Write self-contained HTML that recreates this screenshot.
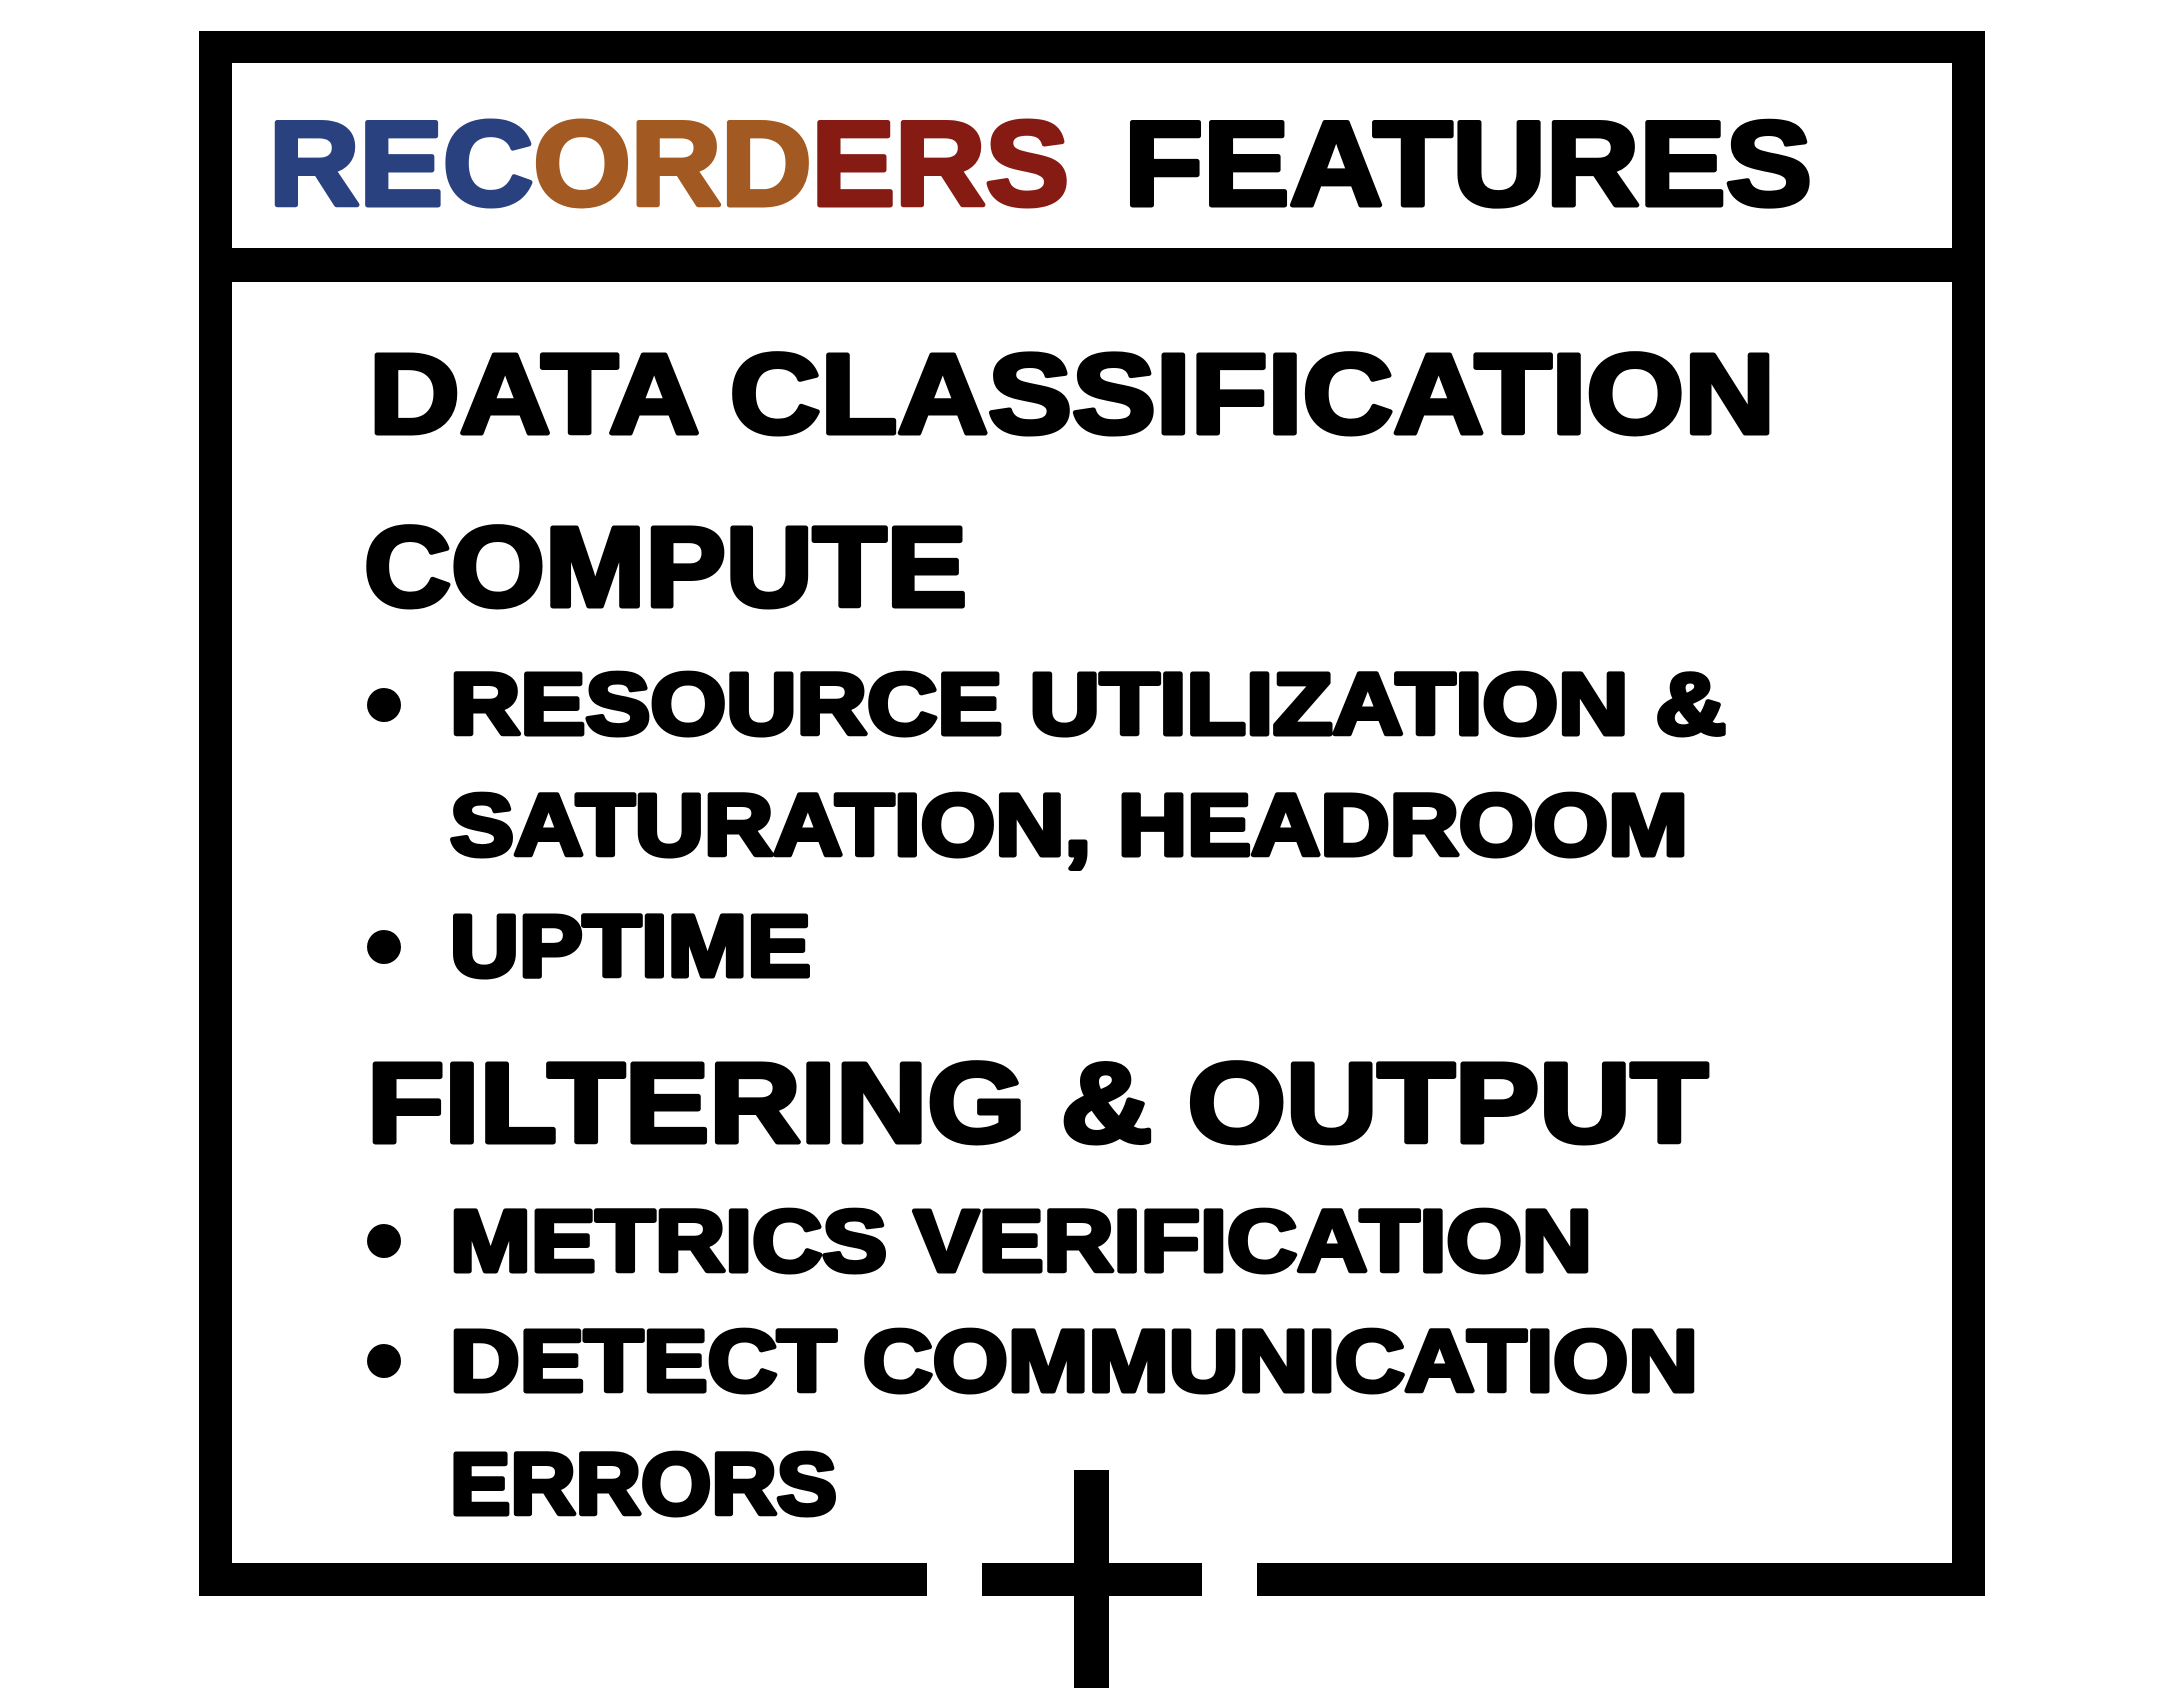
<!DOCTYPE html>
<html><head><meta charset="utf-8"><style>
html,body{margin:0;padding:0;background:#fff;width:2182px;height:1688px;overflow:hidden}
svg{display:block}
text{font-family:"Liberation Sans",Arial,sans-serif;font-weight:bold;stroke-linejoin:round}
</style></head><body>
<svg width="2182" height="1688" viewBox="0 0 2182 1688" xmlns="http://www.w3.org/2000/svg">
<rect width="2182" height="1688" fill="#fff"/>
<g fill="#000">
<rect x="199" y="31" width="1786" height="32"/>
<rect x="199" y="31" width="33" height="1565"/>
<rect x="1952" y="31" width="33" height="1565"/>
<rect x="199" y="248" width="1786" height="34"/>
<rect x="199" y="1563" width="728" height="33"/>
<rect x="982" y="1563" width="220" height="33"/>
<rect x="1257" y="1563" width="728" height="33"/>
<rect x="1074" y="1470" width="35" height="218"/>
</g>
<g stroke-width="5">
<text x="269" y="205" font-size="120" textLength="800" lengthAdjust="spacingAndGlyphs"><tspan fill="#2a4180" stroke="#2a4180">REC</tspan><tspan fill="#a25a22" stroke="#a25a22">ORD</tspan><tspan fill="#861b14" stroke="#861b14">ERS</tspan></text>
<text x="1124" y="205" font-size="120" fill="#000" stroke="#000" textLength="688" lengthAdjust="spacingAndGlyphs">FEATURES</text>
</g>
<g fill="#000" stroke="#000" stroke-width="5">
<text x="369" y="433" font-size="113" textLength="1406" lengthAdjust="spacingAndGlyphs">DATA CLASSIFICATION</text>
<text x="364" y="606" font-size="113" textLength="603" lengthAdjust="spacingAndGlyphs">COMPUTE</text>
<text x="450" y="734" font-size="87" textLength="1276" lengthAdjust="spacingAndGlyphs">RESOURCE UTILIZATION &amp;</text>
<text x="450" y="855" font-size="87" textLength="1238" lengthAdjust="spacingAndGlyphs">SATURATION, HEADROOM</text>
<text x="450" y="976" font-size="87" textLength="361" lengthAdjust="spacingAndGlyphs">UPTIME</text>
<text x="367" y="1142" font-size="113" textLength="1341" lengthAdjust="spacingAndGlyphs">FILTERING &amp; OUTPUT</text>
<text x="450" y="1271" font-size="87" textLength="1142" lengthAdjust="spacingAndGlyphs">METRICS VERIFICATION</text>
<text x="450" y="1391" font-size="87" textLength="1248" lengthAdjust="spacingAndGlyphs">DETECT COMMUNICATION</text>
<text x="450" y="1514" font-size="87" textLength="387" lengthAdjust="spacingAndGlyphs">ERRORS</text>
</g>
<g fill="#000">
<circle cx="384" cy="705" r="17"/>
<circle cx="384" cy="947" r="17"/>
<circle cx="384" cy="1241" r="17"/>
<circle cx="384" cy="1361" r="17"/>
</g>
</svg>
</body></html>
